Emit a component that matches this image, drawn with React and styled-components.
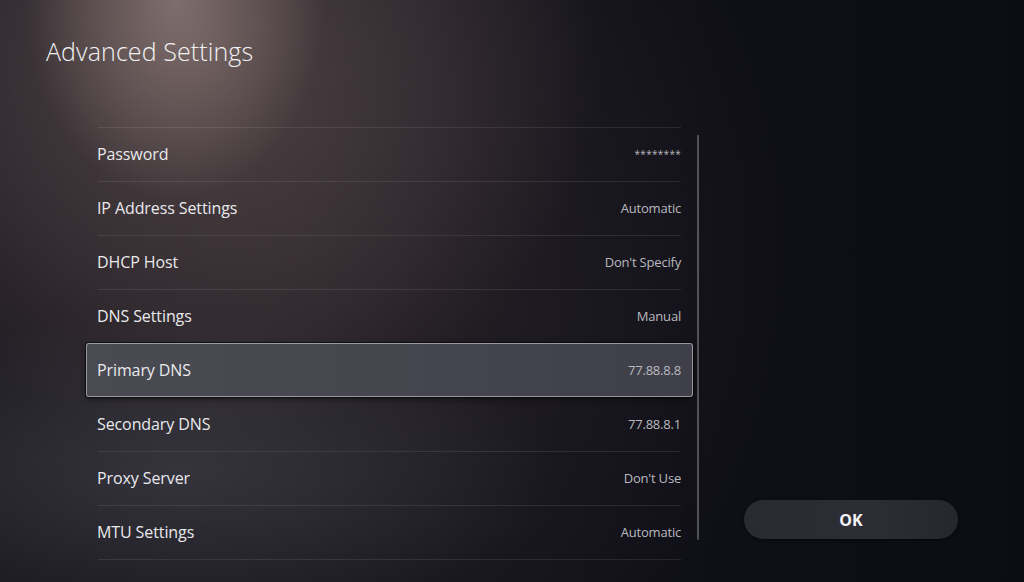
import React from 'react';
import styled, { createGlobalStyle } from 'styled-components';

const GlobalStyle = createGlobalStyle`
  html, body {
    margin: 0;
    padding: 0;
    background: #0e0e17;
  }
  * { box-sizing: border-box; }
`;

const Screen = styled.div`
  width: 1024px;
  height: 582px;
  overflow: hidden;
  display: flex;
  flex-direction: column;
  font-family: "Open Sans", "Noto Sans", sans-serif;
  color: #ececef;
  background:
    radial-gradient(ellipse 150px 200px at 175px 0px, rgba(150, 130, 126, 0.7), rgba(150, 130, 126, 0) 100%),
    radial-gradient(ellipse 400px 380px at 200px 60px, rgba(92, 78, 78, 0.8), rgba(92, 78, 78, 0) 100%),
    radial-gradient(ellipse 380px 160px at 180px 470px, rgba(70, 72, 82, 0.55), rgba(70, 72, 82, 0) 100%),
    radial-gradient(ellipse 500px 500px at 300px 250px, rgba(48, 40, 44, 0.7), rgba(48, 40, 44, 0) 100%),
    linear-gradient(90deg, #18161e 0%, #15141c 40%, #0f0f18 70%, #0c0c15 100%);
`;

const Header = styled.header`
  height: 127px;
  padding: 34px 0 0 46px;
`;

const Title = styled.h1`
  margin: 0;
  font-weight: 300;
  font-size: 25px;
  line-height: 34px;
  color: #f2f2f4;
  letter-spacing: 0.1px;
`;

const Main = styled.main`
  flex: 1;
  display: flex;
  padding-left: 86px;
`;

const List = styled.ul`
  list-style: none;
  margin: 0;
  padding: 0;
  width: 607px;
  align-self: flex-start;
`;

const Row = styled.li`
  position: relative;
  height: 54px;
  display: flex;
  align-items: center;
  justify-content: space-between;
  padding: 0 11px 0 10px;
  border: 1px solid ${p => (p.$active ? 'rgba(190, 190, 200, 0.7)' : 'transparent')};
  border-radius: 3px;
  background: ${p => (p.$active
    ? 'linear-gradient(90deg, #4a4a53 0%, #46464f 50%, #3f3f49 100%)'
    : 'transparent')};
  box-shadow: ${p => (p.$active ? '0 0 0 1px rgba(0,0,0,0.5), 0 2px 6px rgba(0,0,0,0.5)' : 'none')};

  &::before {
    content: '';
    position: absolute;
    left: 11px;
    right: 11px;
    top: -1px;
    height: 1px;
    background: rgba(255, 255, 255, 0.09);
    display: ${p => (p.$hideLine ? 'none' : 'block')};
  }
`;

const Label = styled.span`
  font-size: 16px;
  color: #e9e9ec;
  letter-spacing: -0.1px;
`;

const Value = styled.span`
  font-size: ${p => (p.$masked ? '10px' : '13px')};
  color: #b9b9bf;
  letter-spacing: ${p => (p.$masked ? '0.3px' : '-0.2px')};
`;

const Scrollbar = styled.div`
  width: 2px;
  height: 405px;
  margin: 8px 0 0 4px;
  background: rgba(200, 200, 210, 0.35);
  border-radius: 1px;
`;

const Side = styled.div`
  flex: 1;
  display: flex;
  align-items: flex-end;
  padding: 0 0 43px 45px;
`;

const OkButton = styled.button`
  width: 214px;
  height: 39px;
  border: none;
  border-radius: 20px;
  background: linear-gradient(90deg, #2a2a33 0%, #2d2d36 60%, #26262f 100%);
  box-shadow: 0 1px 3px rgba(0, 0, 0, 0.5);
  color: #f4f4f6;
  font-family: "Open Sans", "Noto Sans", sans-serif;
  font-weight: 700;
  font-size: 16px;
  cursor: pointer;
`;

const items = [
  { label: 'Password', value: '********', masked: true },
  { label: 'IP Address Settings', value: 'Automatic' },
  { label: 'DHCP Host', value: "Don't Specify" },
  { label: 'DNS Settings', value: 'Manual' },
  { label: 'Primary DNS', value: '77.88.8.8', active: true },
  { label: 'Secondary DNS', value: '77.88.8.1' },
  { label: 'Proxy Server', value: "Don't Use" },
  { label: 'MTU Settings', value: 'Automatic' },
];

export default function App() {
  return (
    <Screen>
      <GlobalStyle />
      <Header>
        <Title>Advanced Settings</Title>
      </Header>
      <Main>
        <List>
          {items.map((it, i) => (
            <Row
              key={it.label}
              $active={it.active}
              $hideLine={it.active || (items[i - 1] && items[i - 1].active)}
            >
              <Label>{it.label}</Label>
              <Value $masked={it.masked}>{it.value}</Value>
            </Row>
          ))}
          <Row as="div" style={{ height: 1 }} />
        </List>
        <Scrollbar />
        <Side>
          <OkButton>OK</OkButton>
        </Side>
      </Main>
    </Screen>
  );
}
